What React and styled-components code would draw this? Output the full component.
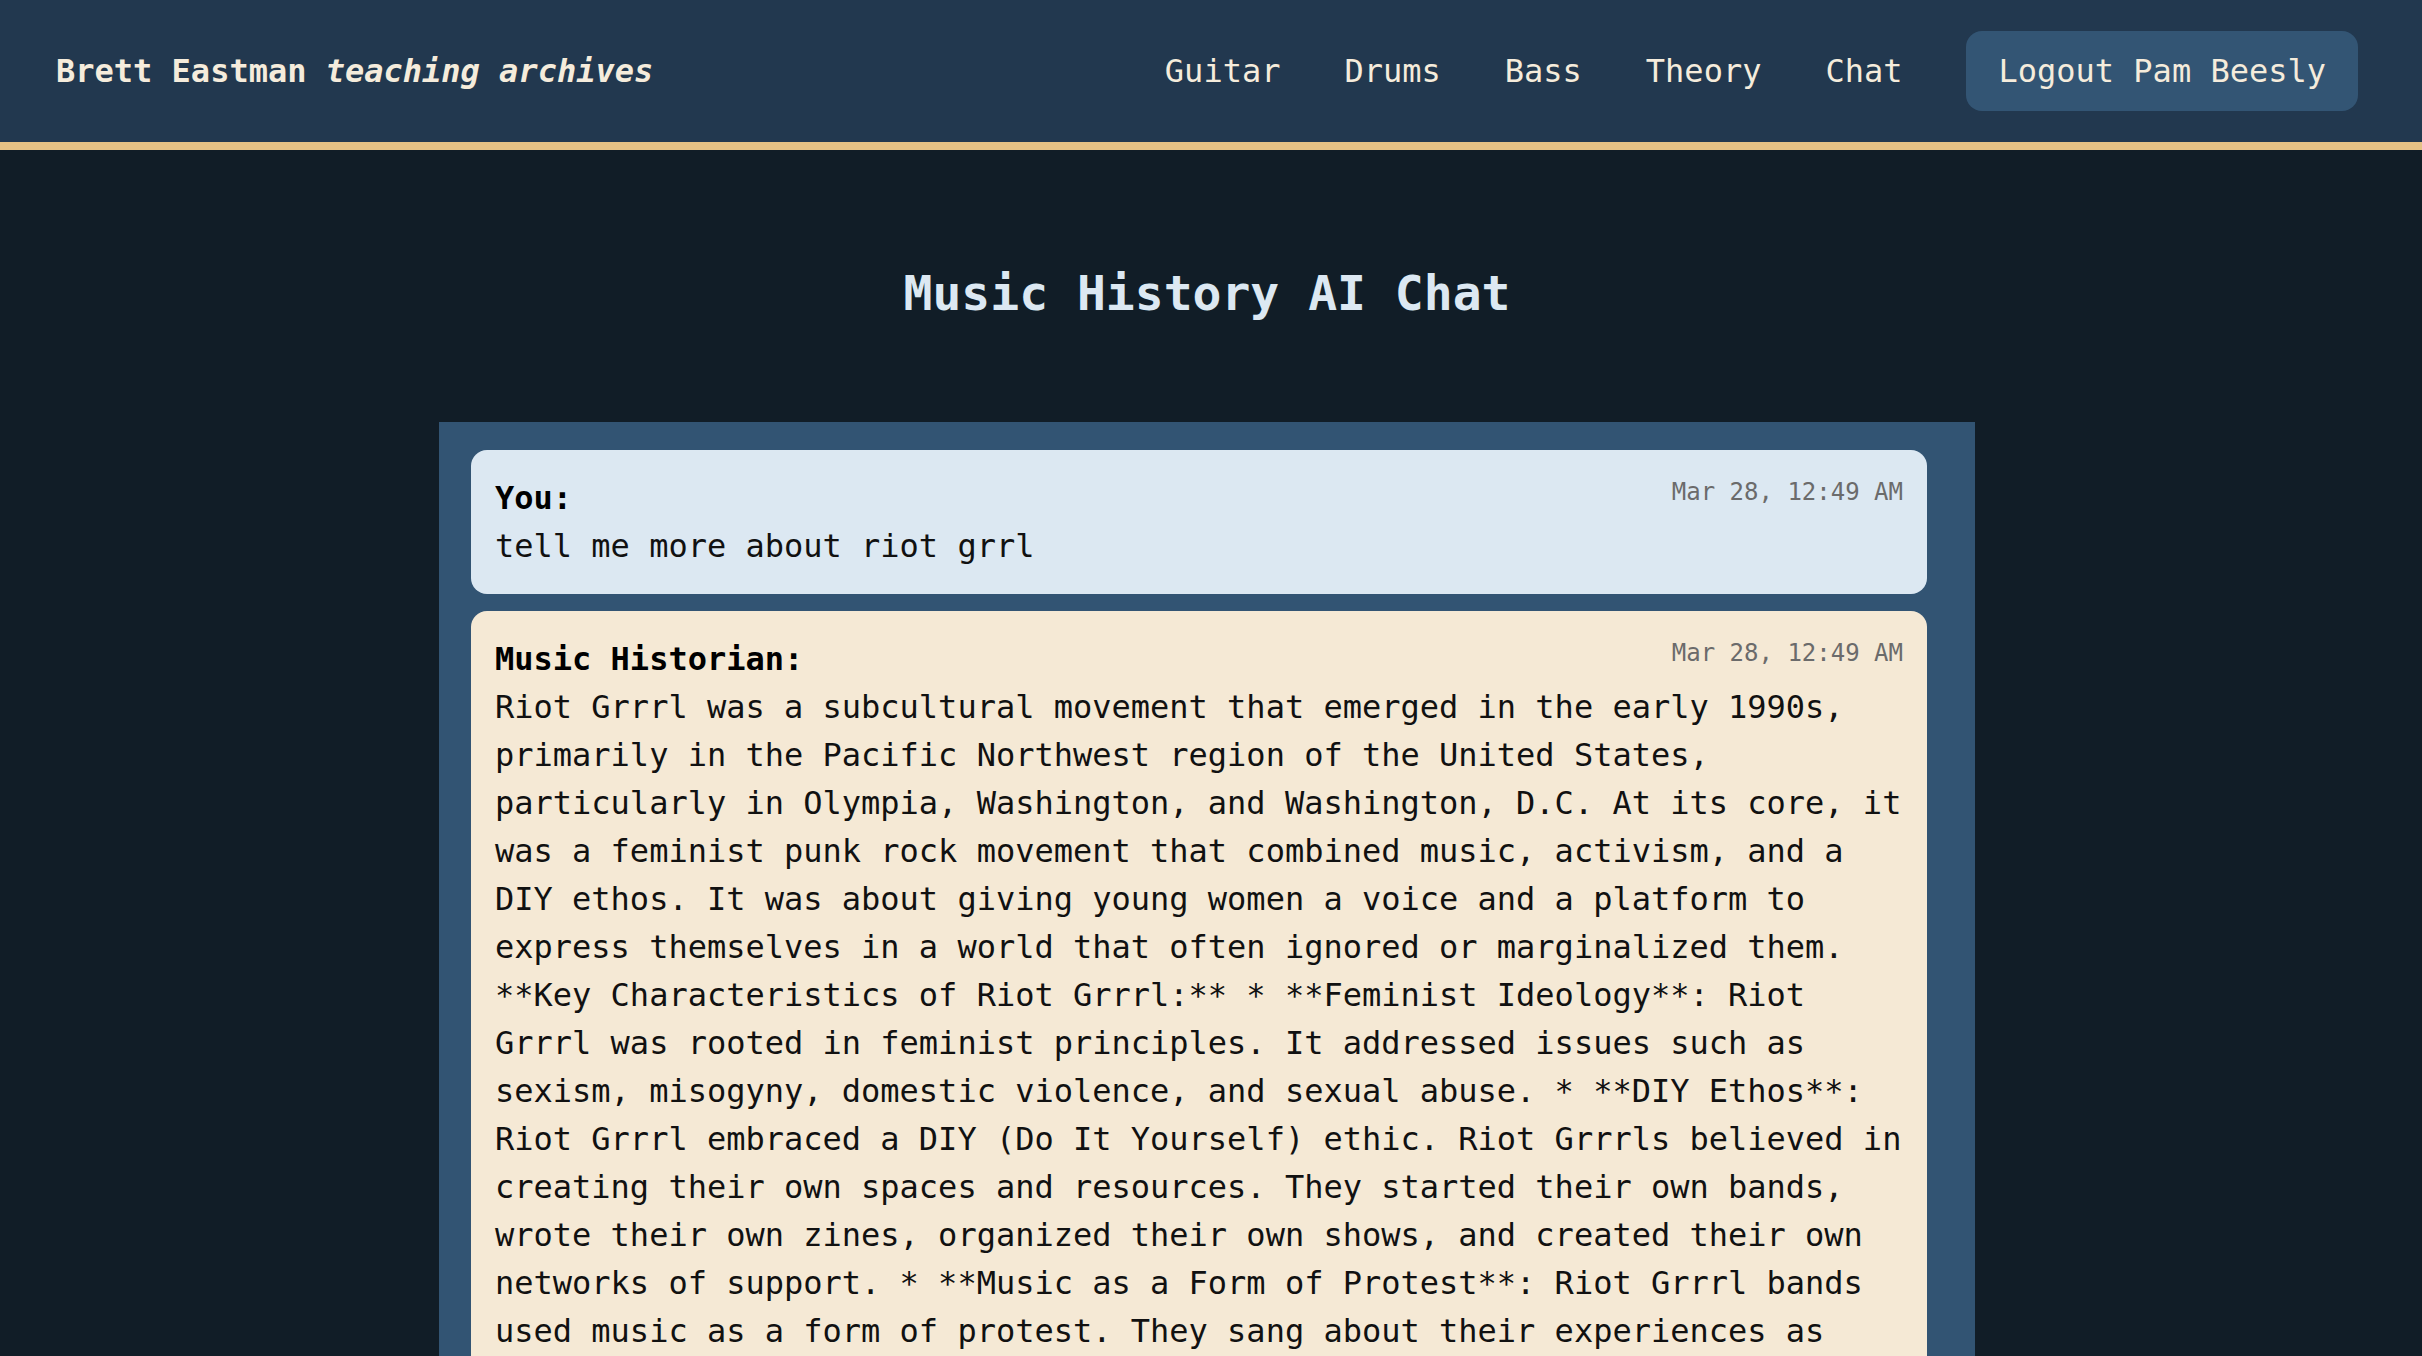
import styled, { createGlobalStyle } from 'styled-components';

const GlobalStyle = createGlobalStyle`
  * {
    box-sizing: border-box;
  }

  body {
    margin: 0;
    background: #111d27;
    font-family: "DejaVu Sans Mono", "Liberation Mono", monospace;
    overflow: hidden;
  }
`;

const Header = styled.header`
  height: 150px;
  background: #22384f;
  border-bottom: 8px solid #e5c185;
  display: flex;
  align-items: center;
  justify-content: space-between;
  padding: 0 64px 0 56px;
`;

const Brand = styled.div`
  font-size: 32px;
  font-weight: bold;
  color: #f5ecdc;
  white-space: nowrap;

  em {
    font-style: italic;
  }
`;

const Nav = styled.nav`
  display: flex;
  align-items: center;
  gap: 64px;
`;

const NavLink = styled.a`
  font-size: 32px;
  line-height: 48px;
  color: #f5ecdc;
  text-decoration: none;
  cursor: pointer;
`;

const LogoutButton = styled.button`
  font-family: inherit;
  font-size: 32px;
  line-height: 48px;
  color: #f5ecdc;
  background: #335574;
  border: none;
  border-radius: 16px;
  padding: 16px 32px;
  cursor: pointer;
`;

const Main = styled.main`
  padding: 107px 8px 0 0;
  display: flex;
  flex-direction: column;
  align-items: center;
`;

const Title = styled.h1`
  margin: 0 0 93px;
  font-size: 48px;
  line-height: 72px;
  font-weight: bold;
  color: #dce8f2;
`;

const ChatBox = styled.section`
  width: 1536px;
  background: #325473;
  padding: 28px 48px 32px 32px;
  display: flex;
  flex-direction: column;
  gap: 17px;
`;

const Message = styled.div`
  background: ${({ $fromUser }) => ($fromUser ? '#dce8f2' : '#f5e9d5')};
  border-radius: 16px;
  padding: 24px 24px 24px 24px;
  color: #111;
`;

const MessageHead = styled.div`
  display: flex;
  justify-content: space-between;
  align-items: flex-start;
`;

const Sender = styled.strong`
  font-size: 32px;
  line-height: 48px;
  font-weight: bold;
  color: #000;
`;

const Timestamp = styled.span`
  font-size: 24px;
  line-height: 36px;
  color: #6b6b6b;
`;

const Body = styled.p`
  margin: 0;
  font-size: 32px;
  line-height: 48px;
  color: #111;
`;

const messages = [
  {
    sender: 'You',
    fromUser: true,
    time: 'Mar 28, 12:49 AM',
    text: 'tell me more about riot grrl',
  },
  {
    sender: 'Music Historian',
    time: 'Mar 28, 12:49 AM',
    text:
      'Riot Grrrl was a subcultural movement that emerged in the early 1990s, primarily in the Pacific Northwest region of the United States, particularly in Olympia, Washington, and Washington, D.C. At its core, it was a feminist punk rock movement that combined music, activism, and a DIY ethos. It was about giving young women a voice and a platform to express themselves in a world that often ignored or marginalized them. **Key Characteristics of Riot Grrrl:** * **Feminist Ideology**: Riot Grrrl was rooted in feminist principles. It addressed issues such as sexism, misogyny, domestic violence, and sexual abuse. * **DIY Ethos**: Riot Grrrl embraced a DIY (Do It Yourself) ethic. Riot Grrrls believed in creating their own spaces and resources. They started their own bands, wrote their own zines, organized their own shows, and created their own networks of support. * **Music as a Form of Protest**: Riot Grrrl bands used music as a form of protest. They sang about their experiences as young women, about sexism and violence, and about the need for change in the punk scene and beyond.',
  },
];

const navItems = ['Guitar', 'Drums', 'Bass', 'Theory', 'Chat'];

export default function App() {
  return (
    <>
      <GlobalStyle />
      <Header>
        <Brand>
          Brett Eastman <em>teaching archives</em>
        </Brand>
        <Nav>
          {navItems.map((item) => (
            <NavLink key={item}>{item}</NavLink>
          ))}
          <LogoutButton>Logout Pam Beesly</LogoutButton>
        </Nav>
      </Header>
      <Main>
        <Title>Music History AI Chat</Title>
        <ChatBox>
          {messages.map((msg, i) => (
            <Message key={i} $fromUser={msg.fromUser}>
              <MessageHead>
                <Sender>{msg.sender}:</Sender>
                <Timestamp>{msg.time}</Timestamp>
              </MessageHead>
              <Body>{msg.text}</Body>
            </Message>
          ))}
        </ChatBox>
      </Main>
    </>
  );
}
